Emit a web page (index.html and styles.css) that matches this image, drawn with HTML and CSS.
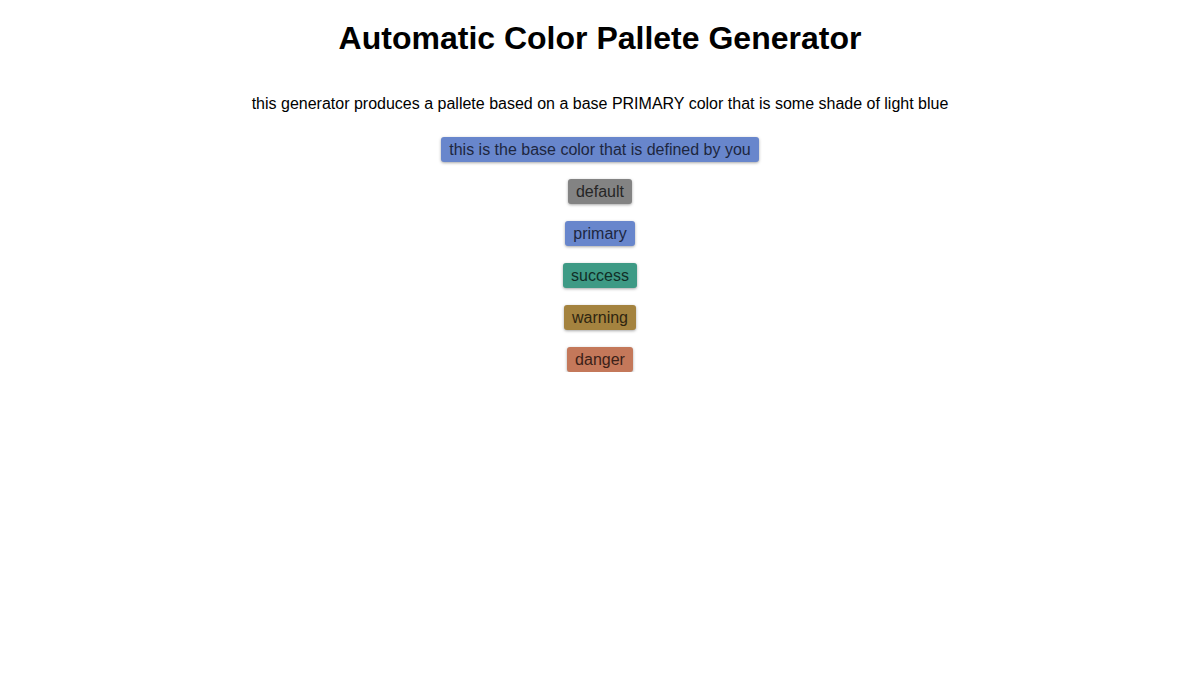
FILE: index.html
```html
<!DOCTYPE html>
<html lang="en">
<head>
    <meta charset="utf-8"/>
    <meta name="viewport" content="width=device-width, initial-scale=1"/>
    <title>Automatic Color Pallete Generator</title>
    <link rel="stylesheet" href="styles.css">
</head>
<body>
    <h1>Automatic Color Pallete Generator</h1>
    <p class="intro">this generator produces a pallete based on a base PRIMARY color that is some shade of light blue</p>
    <div class="swatches">
        <!-- base color, then the generated ones -->
        <span class="swatch base">this is the base color that is defined by you</span>
        <span class="swatch default">default</span>
        <span class="swatch primary">primary</span>
        <span class="swatch success">success</span>
        <span class="swatch warning">warning</span>
        <span class="swatch danger">danger</span>
    </div>
</body>
</html>
```

FILE: styles.css
```css
html, body {
    margin:0;
    padding:0;
    background:#fff;
}
body {
    font-family:"Liberation Sans", Arial, sans-serif;
    color:#000;
    text-align:center;
}
h1 {
    font-size:32px;
    margin:20px 0 0 0;
    line-height:37px;
}
.intro {
    font-size:16px;
    margin:38px 0 0 0;
    line-height:18px;
}
.swatches {
    display:flex;
    flex-direction:column;
    align-items:center;
    gap:17px;
    margin-top:24px;
}
.swatch {
    font-size:16px;
    line-height:19px;
    padding:3px 8px;
    border-radius:3px;
    box-shadow:0 1px 3px rgba(0,0,0,0.35);
}
.base, .primary {
    background:#6886cc;
    color:#1d2640;
}
.default {
    background:#838383;
    color:#262626;
}
.success {
    background:#3e9a85;
    color:#112e27;
}
.warning {
    background:#a4833f;
    color:#2f2510;
}
.danger {
    background:#c4785a;
    color:#3b2118;
}
```
